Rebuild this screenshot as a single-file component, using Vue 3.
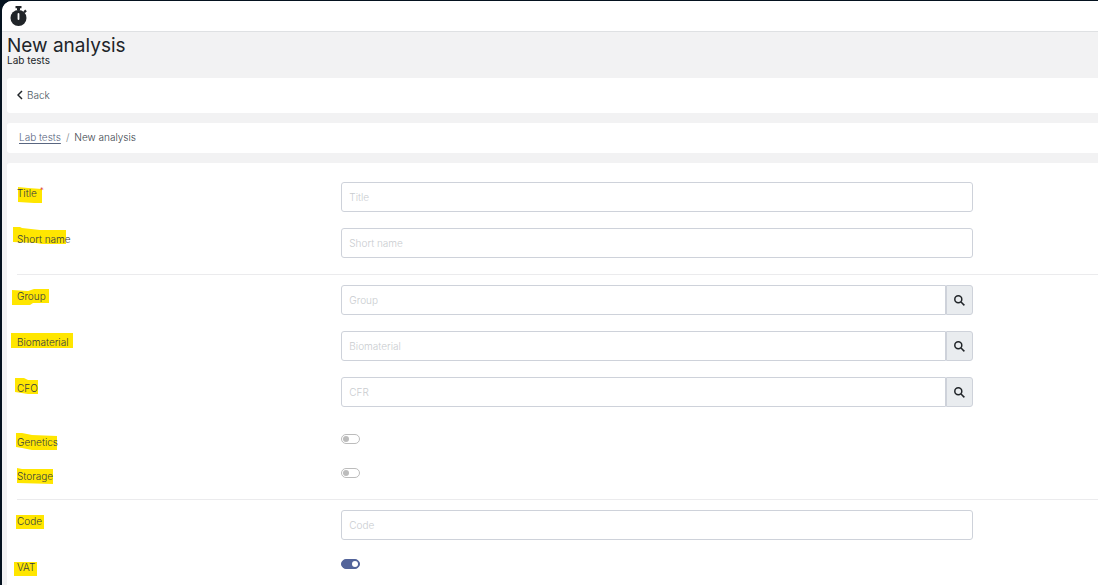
<script setup>
import { reactive } from 'vue'

const groups = reactive([
  [
    { id: 'title', label: 'Title', required: true, type: 'text', hint: 'Title', mark: '1,5 11,6 25,7 25,21 17,21 1,20' },
    { id: 'short', label: 'Short name', type: 'text', hint: 'Short name', mark: '-4,-1 3,-1 5,0 23,2 49,2 49,16 25,16 19,15 -4,14' }
  ],
  [
    { id: 'group', label: 'Group', type: 'lookup', hint: 'Group', mark: '-5,5 11,6 17,4 32,4 32,18 16,18 13,20 -5,20' },
    { id: 'biomaterial', label: 'Biomaterial', type: 'lookup', hint: 'Biomaterial', mark: '-6,2 56,2 56,17 -6,17' },
    { id: 'cfo', label: 'CFO', type: 'lookup', hint: 'CFR', mark: '-2,1 7,1 11,3 21,3 21,17 11,17 -2,15' },
    { id: 'genetics', label: 'Genetics', type: 'switch', on: false, spaced: true, mark: '-1,2 5,2 15,4 40,5 40,19 15,19 5,17 -1,16' },
    { id: 'storage', label: 'Storage', type: 'switch', on: false, mark: '0,3 5,4 36,4 36,19 0,18' }
  ],
  [
    { id: 'code', label: 'Code', type: 'text', hint: 'Code', mark: '-1,5 27,5 27,19 -1,19' },
    { id: 'vat', label: 'VAT', type: 'switch', on: true, mark: '-3,6 20,6 20,20 -3,20' }
  ]
])
</script>

<template>
  <div class="app">
    <header class="topbar">
      <svg class="timer" viewBox="0 0 18 20" aria-hidden="true">
        <path d="M5.500 0h6v2.300H10v2h-3v-2H5.500z" fill="#212529" />
        <path d="M13.300 5.600l1.900-2 1.600 1.600-2 2z" fill="#212529" />
        <circle cx="8.500" cy="12" r="8" fill="#212529" />
        <path d="M8.500 8v5" stroke="#fff" stroke-width="1.800" stroke-linecap="round" />
      </svg>
    </header>

    <main class="page">
      <h1>New analysis</h1>
      <p class="subtitle">Lab tests</p>

      <div class="card toolbar">
        <a href="#" class="back">
          <svg viewBox="0 0 6 10" aria-hidden="true">
            <path d="M5 1L1 5l4 4" fill="none" stroke="#212529" stroke-width="1.500" />
          </svg>
          <span>Back</span>
        </a>
      </div>

      <nav class="card crumbs" aria-label="Breadcrumb">
        <a href="#">Lab tests</a>
        <span class="slash">/</span>
        <span class="current">New analysis</span>
      </nav>

      <form class="card form" @submit.prevent>
        <section v-for="(rows, g) in groups" :key="g" class="group">
          <div
            v-for="row in rows"
            :key="row.id"
            class="row"
            :class="{ short: row.type === 'switch', spaced: row.spaced }"
          >
            <label :for="row.id">
              <svg class="mark" width="1" height="1" aria-hidden="true">
                <polygon :points="row.mark" fill="#ffe600" />
              </svg>
              <span class="name">{{ row.label }}</span><sup v-if="row.required">*</sup>
            </label>

            <input v-if="row.type === 'text'" :id="row.id" class="text" type="text" :placeholder="row.hint" />

            <div v-else-if="row.type === 'lookup'" class="lookup">
              <input :id="row.id" class="text" type="text" :placeholder="row.hint" />
              <button type="button" :aria-label="'Find ' + row.label">
                <svg viewBox="0 0 11 11" aria-hidden="true">
                  <circle cx="4.300" cy="4.300" r="3.500" />
                  <path d="M7 7l3.400 3.400" />
                </svg>
              </button>
            </div>

            <input v-else :id="row.id" v-model="row.on" class="switch" type="checkbox" role="switch" />
          </div>
        </section>
      </form>
    </main>
  </div>
</template>

<style>
html {
  background: #04121f;
}
body {
  margin: 0;
  overflow: hidden;
}
</style>

<style scoped>
* {
  box-sizing: border-box;
}
.app {
  margin: 1px 0 0 2px;
  min-height: 100vh;
  background: #f2f2f3;
  border-top-left-radius: 10px;
  overflow: hidden;
  font-family: Inter, "Liberation Sans", sans-serif;
  font-size: 10px;
  font-weight: 300;
  line-height: 16px;
  color: #212529;
}
.topbar {
  height: 31px;
  padding: 5px 8px;
  background: #fff;
  border-bottom: 1px solid #dfe1e3;
}
.timer {
  display: block;
  width: 18px;
  height: 20px;
}
.page {
  padding: 2px 0 0 5px;
}
h1 {
  margin: 0;
  font-size: 19px;
  line-height: 24px;
  font-weight: 400;
}
.subtitle {
  margin: -6px 0 10px;
  font-weight: 400;
}
.card {
  background: #fff;
  border-radius: 3px 0 0 3px;
  margin-bottom: 10px;
}
.toolbar {
  height: 35px;
  padding: 0 10px 2px;
  display: flex;
  align-items: center;
}
.back {
  display: flex;
  align-items: center;
  gap: 4px;
  color: #45525c;
  text-decoration: none;
}
.back svg {
  width: 6px;
  height: 10px;
}
.crumbs {
  height: 30px;
  padding: 0 12px 2px;
  display: flex;
  align-items: center;
  gap: 5px;
}
.crumbs a {
  color: #596680;
  text-underline-offset: 2px;
}
.slash {
  color: #7b838a;
}
.current {
  color: #3a434c;
}
.form {
  padding: 9px 0 0 10px;
}
.group {
  display: flex;
  flex-direction: column;
  gap: 16px;
  padding: 10px 0 16px;
}
.group + .group {
  border-top: 1px solid #ebebed;
}
.row {
  display: grid;
  grid-template-columns: 30% 58.4%;
  height: 30px;
}
.row.short {
  height: 18px;
}
.row.spaced {
  margin-top: 8px;
}
label {
  position: relative;
  justify-self: start;
  align-self: start;
  padding-top: 3px;
  color: #343a40;
}
.mark {
  position: absolute;
  left: 0;
  top: 0;
  overflow: visible;
}
.name {
  position: relative;
}
sup {
  position: relative;
  margin-left: 3px;
  font-size: 8px;
  line-height: 0;
  color: #e03c31;
}
.text {
  width: 100%;
  min-width: 0;
  height: 30px;
  padding: 0 7px;
  border: 1px solid #ced2da;
  border-radius: 3px;
  background: #fff;
  font: inherit;
  color: #212529;
  outline: none;
}
.text::placeholder {
  color: #c9cccf;
  opacity: 1;
}
.lookup {
  display: flex;
}
.lookup .text {
  border-radius: 3px 0 0 3px;
}
.lookup button {
  flex: none;
  display: flex;
  align-items: center;
  justify-content: center;
  width: 27px;
  height: 30px;
  padding: 0;
  border: 1px solid #ced2da;
  border-radius: 0 3px 3px 0;
  background: #e9ecef;
}
.lookup svg {
  width: 11px;
  height: 11px;
  fill: none;
  stroke: #212529;
  stroke-width: 1.500;
}
.switch {
  appearance: none;
  width: 19px;
  height: 10px;
  margin: 3px 0 0;
  border: 1px solid #bcbcbc;
  border-radius: 5px;
  background: #fff;
  display: flex;
  align-items: center;
  padding: 0 1px;
}
.switch::before {
  content: "";
  width: 6px;
  height: 6px;
  border-radius: 50%;
  background: #bcbcbc;
}
.switch:checked {
  justify-content: flex-end;
  border-color: #53649a;
  background: #53649a;
}
.switch:checked::before {
  background: #fff;
}
</style>
